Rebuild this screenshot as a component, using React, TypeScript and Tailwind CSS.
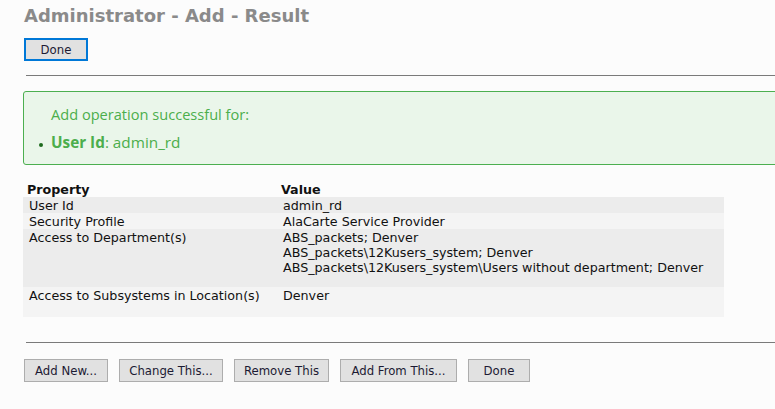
const rows = [
  { name: "User Id", value: ["admin_rd"], bg: "bg-[#ececec]", h: "h-[16px]" },
  { name: "Security Profile", value: ["AlaCarte Service Provider"], bg: "bg-[#f4f4f4]", h: "h-[16px]" },
  {
    name: "Access to Department(s)",
    value: [
      "ABS_packets; Denver",
      "ABS_packets\\12Kusers_system; Denver",
      "ABS_packets\\12Kusers_system\\Users without department; Denver",
    ],
    bg: "bg-[#ececec]",
    h: "h-[58px]",
  },
  { name: "Access to Subsystems in Location(s)", value: ["Denver"], bg: "bg-[#f4f4f4]", h: "h-[30px]" },
];

const actions = [
  { label: "Add New...", w: "w-[84px]" },
  { label: "Change This...", w: "w-[104px]" },
  { label: "Remove This", w: "w-[95px]" },
  { label: "Add From This...", w: "w-[117px]" },
  { label: "Done", w: "w-[62px]" },
];

function Button({ label, w, focused }: { label: string; w: string; focused?: boolean }) {
  return (
    <button
      className={`h-[23px] ${w} bg-[#e1e1e1] text-[13px] leading-none text-[#1c1a33] font-['DejaVu_Sans_Condensed',sans-serif] ${
        focused ? "border-2 border-[#0078d7]" : "border border-[#adadad]"
      }`}
    >
      {label}
    </button>
  );
}

export default function App() {
  return (
    <div className="w-[775px] h-[409px] overflow-hidden bg-[#fcfcfc] font-['DejaVu_Sans',sans-serif]">
      <h1 className="pl-[24px] pt-[4px] text-[18px] font-bold leading-[24px] text-[#8a8a8a]">
        Administrator - Add - Result
      </h1>
      <div className="pl-[24px] mt-[10px] flex">
        <Button label="Done" w="w-[64px]" focused />
      </div>
      <div className="ml-[26px] mt-[14px] border-t border-[#7a7a7a]" />

      <div className="ml-[23px] mt-[15px] -mr-[4px] h-[74px] rounded-l-[3px] border border-[#4caf50] bg-[#eaf6ea] font-['Open_Sans',sans-serif] text-[#4cae4c]">
        <p className="pl-[27px] pt-[12px] text-[14.6px] leading-[20px]">Add operation successful for:</p>
        <div className="mt-[8px] flex items-center">
          <span className="ml-[15px] w-[4px] h-[4px] mt-[6px] rounded-full bg-[#1e6b1e]" />
          <span className="ml-[8px] text-[15.3px] leading-[20px]">
            <b className="font-bold">User Id</b>: admin_rd
          </span>
        </div>
      </div>

      <div className="ml-[23px] mt-[17px] w-[701px] text-[12.7px] leading-[15px] text-[#111]">
        <div className="flex h-[15px] font-bold">
          <div className="w-[254px] pl-[4px]">Property</div>
          <div className="pl-[4px]">Value</div>
        </div>
        {rows.map((r) => (
          <div key={r.name} className={`flex ${r.bg} ${r.h} pt-[1px]`}>
            <div className="w-[254px] pl-[6px]">{r.name}</div>
            <div className="pl-[6px]">
              {r.value.map((v) => (
                <div key={v}>{v}</div>
              ))}
            </div>
          </div>
        ))}
      </div>

      <div className="ml-[26px] mt-[25px] border-t border-[#7a7a7a]" />
      <div className="pl-[24px] mt-[16px] flex gap-[11px]">
        {actions.map((a) => (
          <Button key={a.label} label={a.label} w={a.w} />
        ))}
      </div>
    </div>
  );
}
